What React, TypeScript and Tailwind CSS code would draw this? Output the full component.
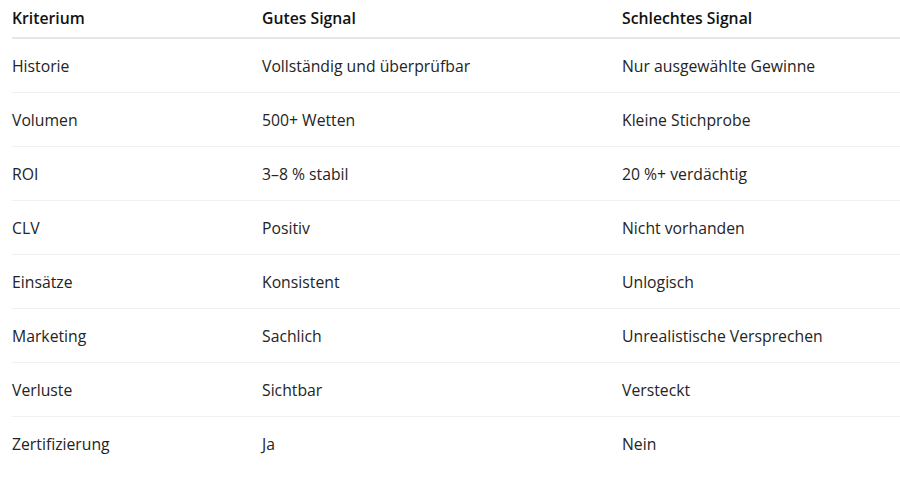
import React from "react";

const rows: [string, string, string][] = [
  ["Historie", "Vollständig und überprüfbar", "Nur ausgewählte Gewinne"],
  ["Volumen", "500+ Wetten", "Kleine Stichprobe"],
  ["ROI", "3–8 % stabil", "20 %+ verdächtig"],
  ["CLV", "Positiv", "Nicht vorhanden"],
  ["Einsätze", "Konsistent", "Unlogisch"],
  ["Marketing", "Sachlich", "Unrealistische Versprechen"],
  ["Verluste", "Sichtbar", "Versteckt"],
  ["Zertifizierung", "Ja", "Nein"],
];

export default function App() {
  return (
    <div className="w-[900px] h-[484px] bg-white pl-3 overflow-hidden" style={{ fontFamily: '"Open Sans", "Noto Sans", sans-serif' }}>
      <div className="grid grid-cols-[250px_360px_1fr] h-[39px] items-center border-b-2 border-[#e6e6e6] text-[15.75px] font-semibold text-[#111]">
        <div>Kriterium</div>
        <div>Gutes Signal</div>
        <div>Schlechtes Signal</div>
      </div>
      {rows.map((r, i) => (
        <div
          key={i}
          className={
            "grid grid-cols-[250px_360px_1fr] h-[54px] pt-[2px] items-center text-[15.75px] text-[#242424] " +
            (i < rows.length - 1 ? "border-b border-[#f0f0f0]" : "")
          }
        >
          <div>{r[0]}</div>
          <div>{r[1]}</div>
          <div>{r[2]}</div>
        </div>
      ))}
    </div>
  );
}
